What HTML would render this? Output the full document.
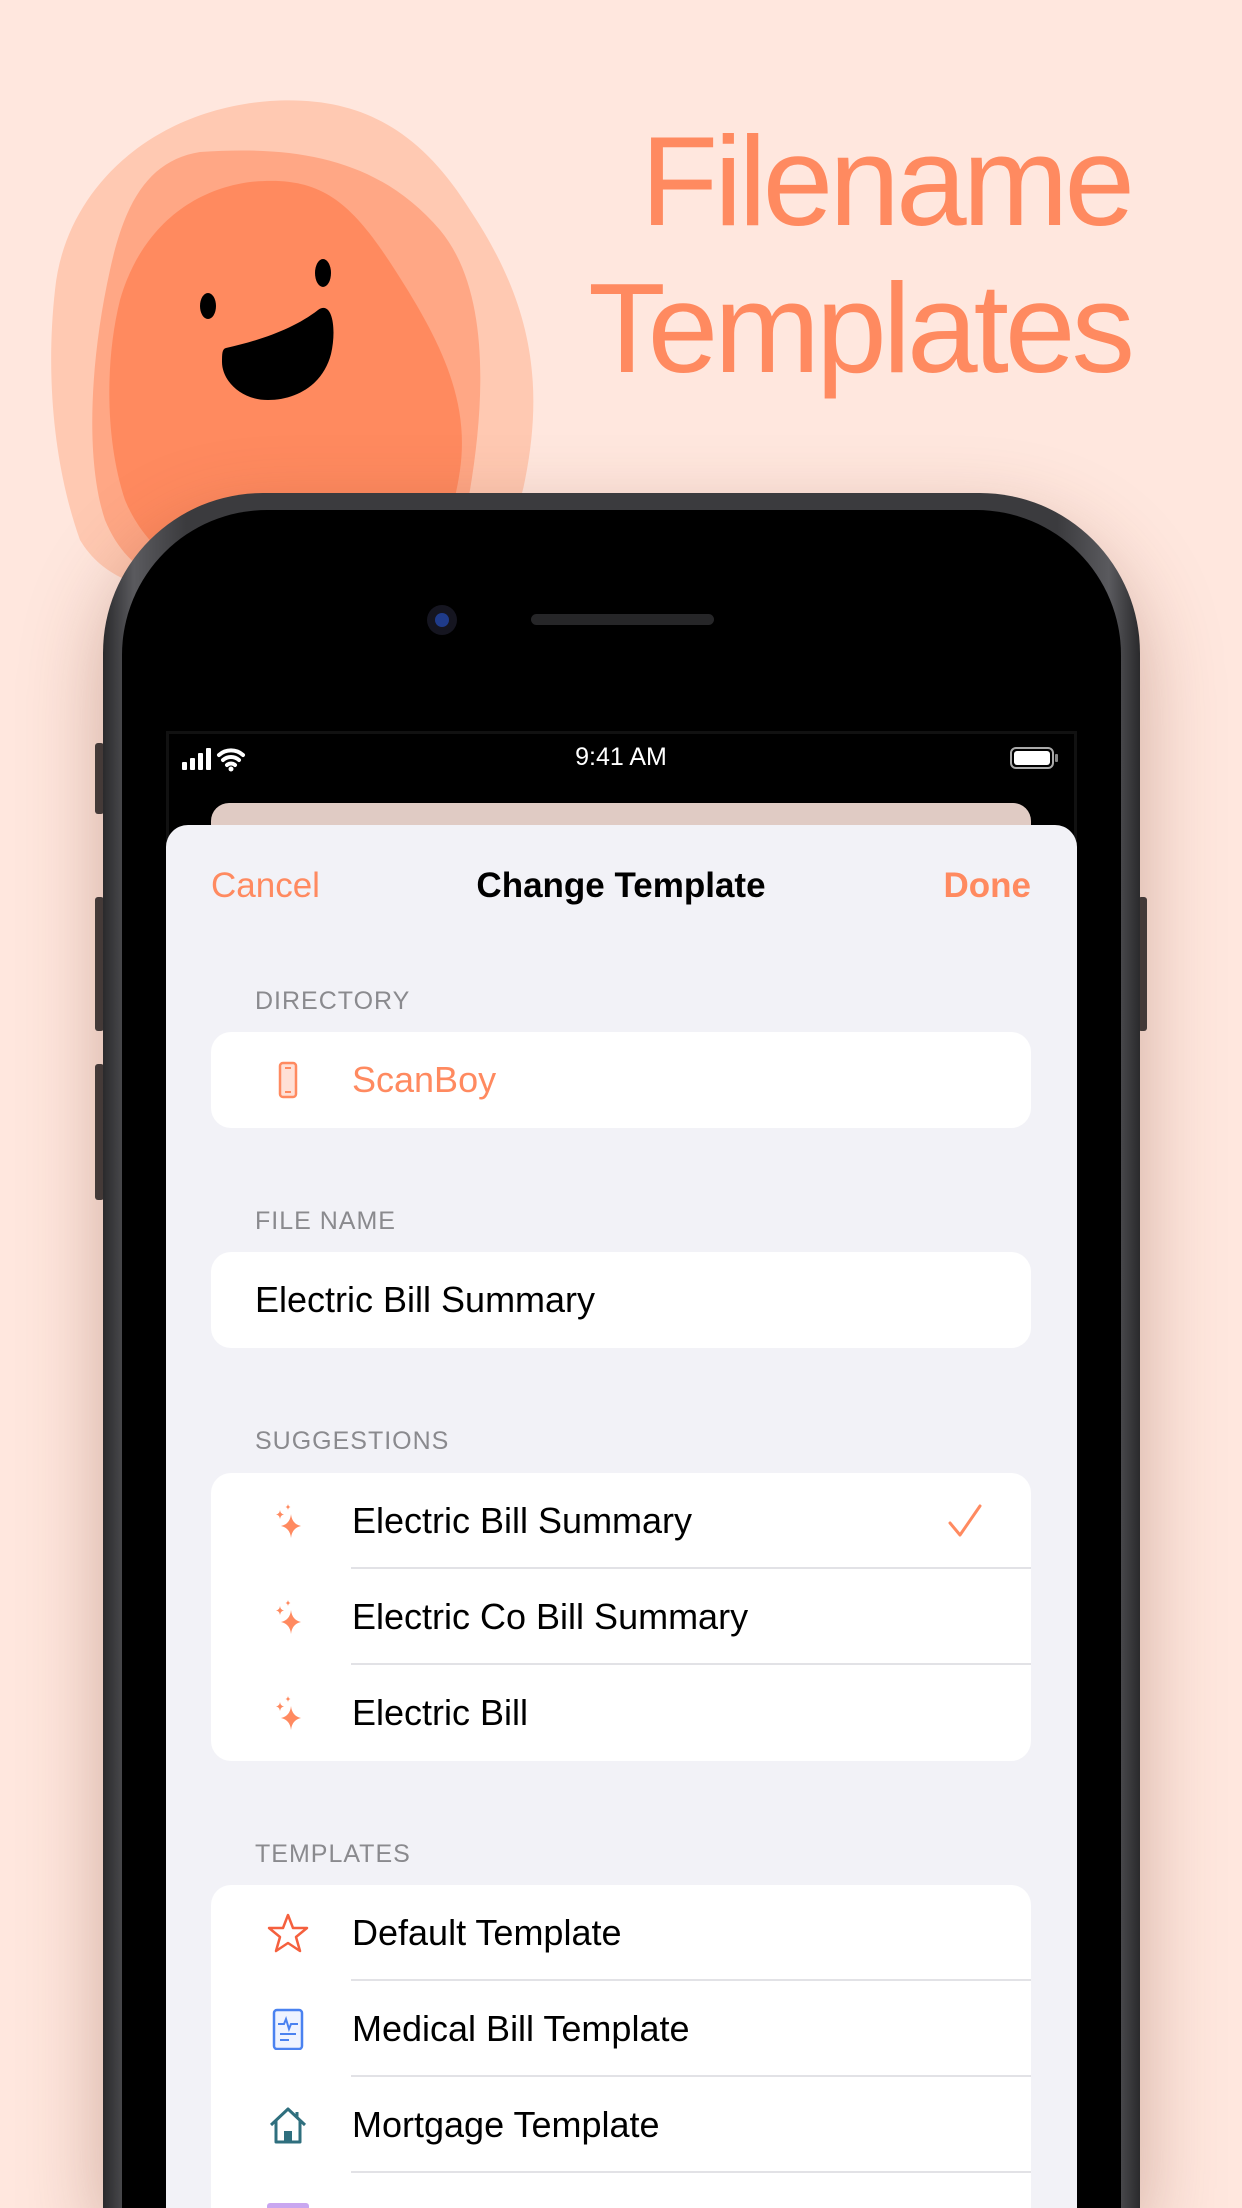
<!DOCTYPE html>
<html style="width:1242px;height:2208px;overflow:hidden"><head><meta charset="utf-8">
<style>
*{margin:0;padding:0;box-sizing:border-box}
html,body{width:1242px;height:2208px;overflow:hidden}
body{background:#ffe7de;font-family:"Liberation Sans",sans-serif}
#wrap{position:relative;width:1242px;height:2208px;overflow:hidden;background:#ffe7de}
.abs{position:absolute}
.title{right:111px;color:#ff8a60;font-size:127px;line-height:1;text-align:right;letter-spacing:-4px}
.phone{left:103px;top:493px;width:1037px;height:1715px;border-radius:160px 160px 0 0;background:linear-gradient(90deg,#2a2a2c,#5a5a5e 3%,#3b3b3e 8%,#3b3b3e 92%,#5a5a5e 97%,#2a2a2c);box-shadow:0 30px 80px rgba(120,60,40,.35)}
.bezel{left:122px;top:510px;width:999px;height:1698px;border-radius:145px 145px 0 0;background:#000}
.btn{background:#3a3a3c;width:9px;border-radius:3px}
.screen{left:166px;top:731px;width:911px;height:1477px;background:#000;border:3px solid #111;border-bottom:0}
.sheet{left:166px;top:825px;width:911px;height:1383px;background:#f2f2f7;border-radius:22px 22px 0 0}
.back{left:211px;top:803px;width:820px;height:40px;background:#e0cbc4;border-radius:18px 18px 0 0}
.lbl{left:255px;font-size:25px;color:#8a8a8e;letter-spacing:1px}
.card{left:211px;width:820px;background:#fff;border-radius:20px;overflow:hidden}
.row{position:relative;height:96px;font-size:36px;color:#000;line-height:96px;padding-left:141px}
.row .sep{position:absolute;left:140px;right:0;bottom:0;height:2px;background:#e2e2e6}
.ic{position:absolute;left:56px;top:27px;width:42px;height:42px}
</style></head><body><div id="wrap">

<svg class="abs" style="left:0;top:0" width="600" height="700" viewBox="0 0 600 700">
<path d="M270 101 C360 95 420 130 470 210 C530 300 545 380 525 480 C510 560 450 600 300 600 C170 600 110 590 80 540 C55 470 45 380 55 290 C65 190 150 110 270 101Z" fill="#ffc9b2"/>
<path d="M200 152 C300 145 380 160 440 230 C490 290 485 400 470 490 C455 570 420 600 300 600 C180 600 130 580 105 520 C85 460 90 360 110 270 C125 200 150 160 200 152Z" fill="#ffa785"/>
<path d="M250 182 C320 175 350 200 395 270 C440 340 470 400 460 470 C450 540 420 600 320 600 C210 600 150 560 125 500 C105 440 105 360 120 300 C140 230 190 190 250 182Z" fill="#ff8a5f"/>
<ellipse cx="208" cy="306" rx="8" ry="13" fill="#000"/>
<ellipse cx="323" cy="273" rx="8" ry="14" fill="#000"/>
<path d="M226 348 C262 340 295 328 318 310 C332 300 337 328 331 354 C323 385 296 400 268 400 C240 400 222 380 222 362 C222 354 222 349 226 348Z" fill="#000"/>
</svg>

<div class="abs title" style="top:118px">Filename</div>
<div class="abs title" style="top:265px">Templates</div>

<div class="abs btn" style="left:95px;top:743px;height:71px"></div>
<div class="abs btn" style="left:95px;top:897px;height:134px"></div>
<div class="abs btn" style="left:95px;top:1064px;height:136px"></div>
<div class="abs btn" style="left:1138px;top:897px;height:134px"></div>
<div class="abs phone"></div>
<div class="abs bezel"></div>
<div class="abs" style="left:427px;top:605px;width:30px;height:30px;border-radius:50%;background:#151520"></div>
<div class="abs" style="left:435px;top:613px;width:14px;height:14px;border-radius:50%;background:#1f3b8a"></div>
<div class="abs" style="left:531px;top:614px;width:183px;height:11px;border-radius:6px;background:#262628"></div>

<div class="abs screen"></div>
<svg class="abs" style="left:180px;top:744px" width="90" height="30">
<rect x="2" y="18" width="5" height="8" rx="1" fill="#fff"/><rect x="10" y="14" width="5" height="12" rx="1" fill="#fff"/><rect x="18" y="9" width="5" height="17" rx="1" fill="#fff"/><rect x="26" y="4" width="5" height="22" rx="1" fill="#fff"/>
<path d="M39 11 A18 18 0 0 1 63 11 M43 16 A12 12 0 0 1 59 16 M47 21 A6 6 0 0 1 55 21" stroke="#fff" stroke-width="4" fill="none" stroke-linecap="round"/><circle cx="51" cy="25" r="2.5" fill="#fff"/>
</svg>
<div class="abs" style="left:521px;top:743px;width:200px;text-align:center;color:#fff;font-size:25px">9:41 AM</div>
<div class="abs" style="left:1010px;top:747px;width:44px;height:22px;border:2px solid #aaa;border-radius:6px;padding:2px"><div style="width:100%;height:100%;background:#fff;border-radius:3px"></div></div>
<div class="abs" style="left:1055px;top:754px;width:3px;height:8px;background:#888;border-radius:1px"></div>

<div class="abs back"></div>
<div class="abs sheet"></div>
<div class="abs" style="left:211px;top:866px;font-size:35px;color:#ff8a60">Cancel</div>
<div class="abs" style="left:421px;top:866px;width:400px;text-align:center;font-size:35px;font-weight:bold">Change Template</div>
<div class="abs" style="left:900px;top:866px;width:131px;text-align:right;font-size:35px;color:#ff8a60;font-weight:bold">Done</div>

<div class="abs lbl" style="top:987px">DIRECTORY</div>
<div class="abs card" style="top:1032px">
 <div class="row" style="color:#ff8a60">
  <svg class="ic" viewBox="0 0 42 42"><rect x="13" y="4" width="16" height="34" rx="3" fill="#ffe0d6" stroke="#ff8a60" stroke-width="2.5"/><line x1="18" y1="9" x2="24" y2="9" stroke="#ff8a60" stroke-width="2"/><line x1="18" y1="33" x2="24" y2="33" stroke="#ff8a60" stroke-width="2"/></svg>
  ScanBoy</div>
</div>

<div class="abs lbl" style="top:1207px">FILE NAME</div>
<div class="abs card" style="top:1252px"><div class="row" style="padding-left:44px">Electric Bill Summary</div></div>

<div class="abs lbl" style="top:1427px">SUGGESTIONS</div>
<div class="abs card" style="top:1473px">
 <div class="row"><svg class="ic" viewBox="0 0 42 42"><path d="M24 14 Q25 24 34 26 Q25 28 24 38 Q23 28 14 26 Q23 24 24 14Z M13 10 Q13.5 14 17 14.5 Q13.5 15 13 19 Q12.5 15 9 14.5 Q12.5 14 13 10Z M21 4 Q21.3 6.5 23.5 7 Q21.3 7.5 21 10 Q20.7 7.5 18.5 7 Q20.7 6.5 21 4Z" fill="#ff8a60"/></svg>Electric Bill Summary
  <svg style="position:absolute;right:48px;top:30px" width="36" height="36" viewBox="0 0 36 36"><path d="M3 20 L13 32 L33 3" stroke="#ff8a60" stroke-width="3" fill="none" stroke-linecap="round" stroke-linejoin="round"/></svg><div class="sep"></div></div>
 <div class="row"><svg class="ic" viewBox="0 0 42 42"><path d="M24 14 Q25 24 34 26 Q25 28 24 38 Q23 28 14 26 Q23 24 24 14Z M13 10 Q13.5 14 17 14.5 Q13.5 15 13 19 Q12.5 15 9 14.5 Q12.5 14 13 10Z M21 4 Q21.3 6.5 23.5 7 Q21.3 7.5 21 10 Q20.7 7.5 18.5 7 Q20.7 6.5 21 4Z" fill="#ff8a60"/></svg>Electric Co Bill Summary<div class="sep"></div></div>
 <div class="row"><svg class="ic" viewBox="0 0 42 42"><path d="M24 14 Q25 24 34 26 Q25 28 24 38 Q23 28 14 26 Q23 24 24 14Z M13 10 Q13.5 14 17 14.5 Q13.5 15 13 19 Q12.5 15 9 14.5 Q12.5 14 13 10Z M21 4 Q21.3 6.5 23.5 7 Q21.3 7.5 21 10 Q20.7 7.5 18.5 7 Q20.7 6.5 21 4Z" fill="#ff8a60"/></svg>Electric Bill</div>
</div>

<div class="abs lbl" style="top:1840px">TEMPLATES</div>
<div class="abs card" style="top:1885px;height:323px;border-radius:20px 20px 0 0">
 <div class="row"><svg class="ic" viewBox="0 0 42 42"><path d="M21 3 L26 16 L40 16 L29 25 L33 39 L21 31 L9 39 L13 25 L2 16 L16 16Z" fill="none" stroke="#f5603e" stroke-width="2.5" stroke-linejoin="round"/></svg>Default Template<div class="sep"></div></div>
 <div class="row"><svg class="ic" viewBox="0 0 42 42"><rect x="7" y="2" width="28" height="39" rx="3" fill="#eef3ff" stroke="#4a82f0" stroke-width="2.5"/><path d="M11 16 L17 16 L19 11 L22 21 L24 16 L31 16 M13 26 L29 26 M13 32 L22 32" stroke="#4a82f0" stroke-width="2" fill="none"/></svg>Medical Bill Template<div class="sep"></div></div>
 <div class="row"><svg class="ic" viewBox="0 0 42 42"><path d="M4 21 L21 5 L38 21 M9 17 L9 38 L33 38 L33 17 M30 8 L30 14" stroke="#2f6f7e" stroke-width="3" fill="none" stroke-linejoin="round"/><rect x="17" y="27" width="8" height="11" fill="#2f6f7e"/></svg>Mortgage Template<div class="sep"></div></div>
 <div style="position:absolute;left:56px;top:318px;width:42px;height:5px;background:#c9a7f0;border-radius:3px 3px 0 0"></div>
</div>
</div></body></html>
